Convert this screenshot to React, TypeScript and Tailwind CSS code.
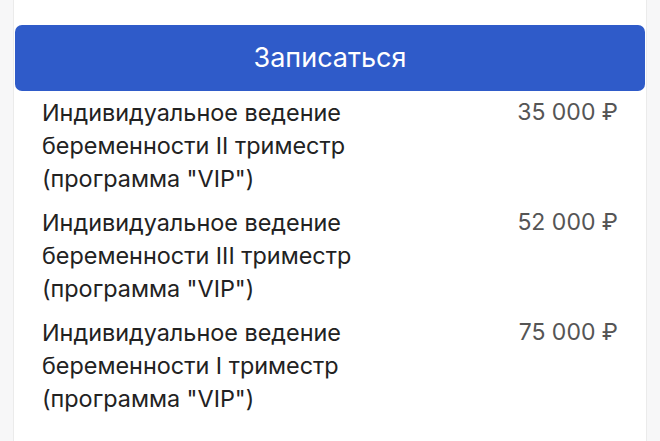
const items = [
  { title: "Индивидуальное ведение беременности II триместр", price: "35 000 ₽" },
  { title: "Индивидуальное ведение беременности III триместр", price: "52 000 ₽" },
  { title: "Индивидуальное ведение беременности I триместр", price: "75 000 ₽" },
];

export default function App() {
  return (
    <div className="min-h-[441px] bg-[#f7f7f8] px-[13px]" style={{ fontFamily: "Inter, 'Noto Sans', sans-serif" }}>
      <div className="min-h-[441px] border-x border-[#ebebeb] bg-white pt-[25px] pb-8">
        <button className="mx-[1px] flex h-[66px] w-[calc(100%-2px)] items-center justify-center rounded-[7px] bg-[#2f5bc9] text-[27px] text-white">
          Записаться
        </button>
        <div className="flex flex-col gap-[11px] pl-[28px] pr-[28px] pt-[5px]">
          {items.map((it) => (
            <div key={it.price} className="flex items-start justify-between gap-4">
              <div className="w-[340px] text-[23.4px] leading-[33px] text-[#222]">
                {it.title} (программа "VIP")
              </div>
              <div className="whitespace-nowrap text-[23px] leading-[33px] text-[#555]">{it.price}</div>
            </div>
          ))}
        </div>
      </div>
    </div>
  );
}
